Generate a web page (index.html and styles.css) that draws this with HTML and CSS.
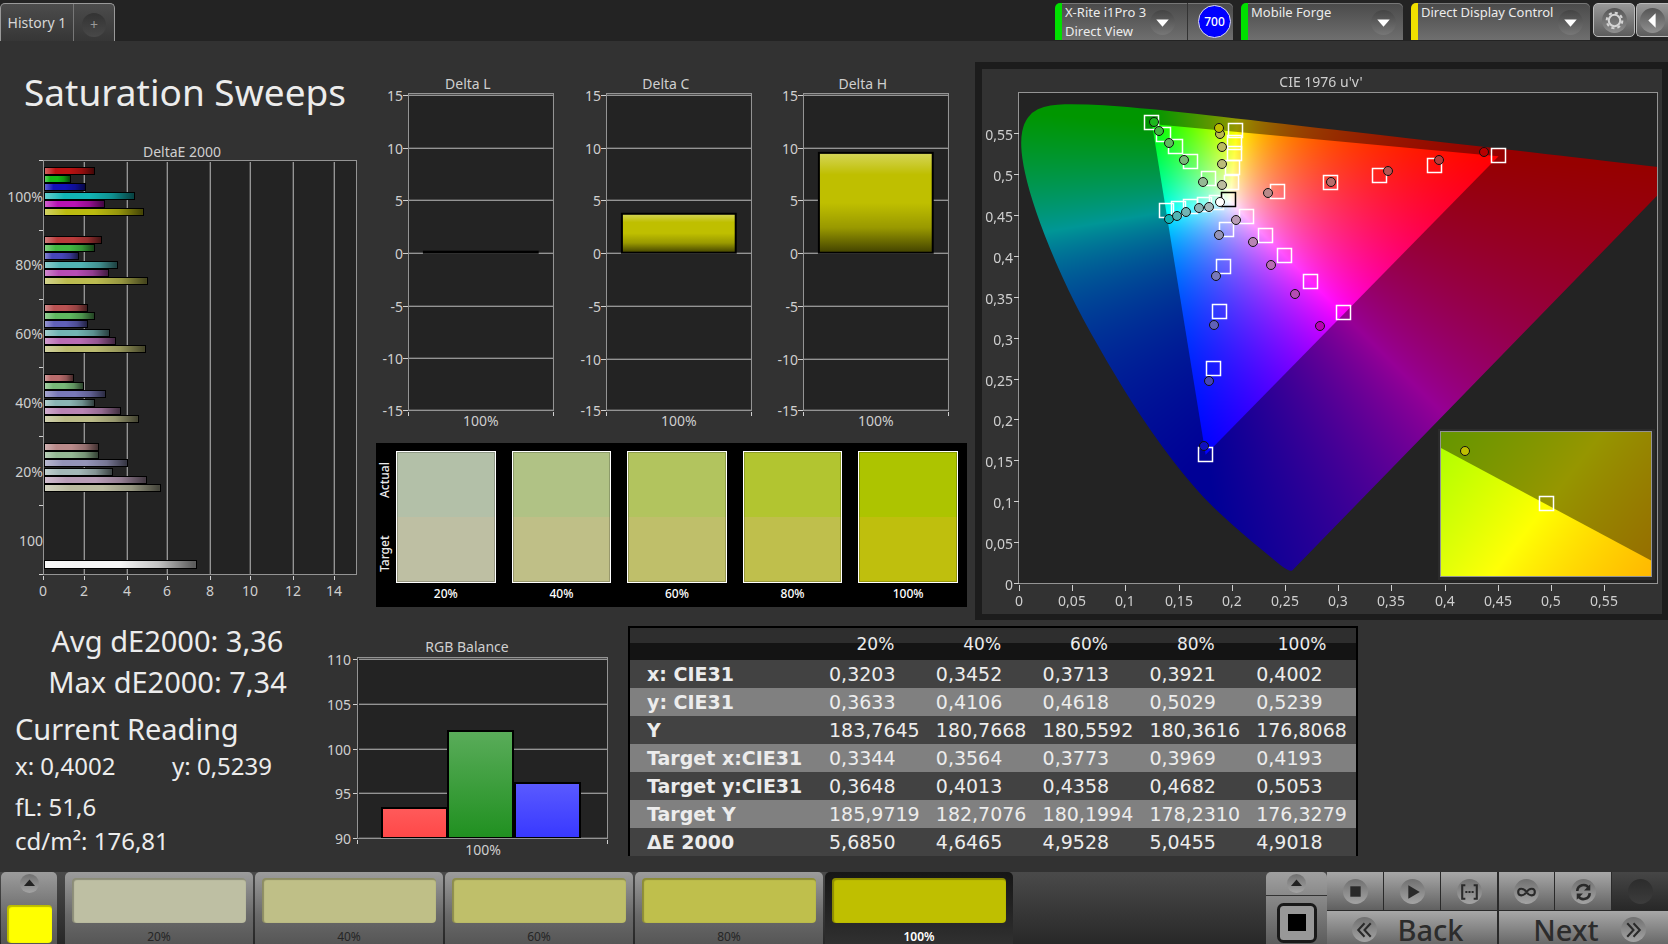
FILE: index.html
```html
<!DOCTYPE html>
<html lang="en">
<head>
<meta charset="utf-8">
<title>Saturation Sweeps</title>
<link rel="stylesheet" href="styles.css">
</head>
<body>
<div class="app">
  <header class="topbar">
    <nav class="tabs">
      <button class="tab" type="button">History 1</button>
      <button class="tab tab-add" type="button" aria-label="Add history"><span class="add-disc">+</span></button>
    </nav>
    <div class="devices">
      <div class="device device-meter">
        <button class="device-menu" type="button" aria-haspopup="menu"><span class="device-text">X-Rite i1Pro 3<br>Direct View</span><span class="disc"><svg viewBox="0 0 24 24"><path d="M6 9h12l-6 7z" fill="#fff"/></svg></span></button>
        <span class="badge-cell"><span class="badge">700</span></span>
      </div>
      <div class="device device-source">
        <button class="device-menu" type="button" aria-haspopup="menu"><span class="device-text">Mobile Forge</span><span class="disc"><svg viewBox="0 0 24 24"><path d="M6 9h12l-6 7z" fill="#fff"/></svg></span></button>
      </div>
      <div class="device device-display">
        <button class="device-menu" type="button" aria-haspopup="menu"><span class="device-text">Direct Display Control</span><span class="disc"><svg viewBox="0 0 24 24"><path d="M6 9h12l-6 7z" fill="#fff"/></svg></span></button>
      </div>
      <button class="square-btn" type="button" aria-label="Settings"><span class="disc"><svg viewBox="0 0 24 24" fill="none" stroke="#d4d4d4"><circle cx="12" cy="12" r="5.500" stroke-width="2"/><circle cx="12" cy="12" r="7.500" stroke-width="2" stroke-dasharray="3 2.890"/></svg></span></button>
      <button class="square-btn square-last" type="button" aria-label="Collapse"><span class="disc"><svg viewBox="0 0 24 24"><path d="M15 5v14l-7-7z" fill="#fff"/></svg></span></button>
    </div>
  </header>

  <main class="content">
    <section class="upper">
      <div class="col-left">
        <h1 class="title">Saturation Sweeps</h1>
        <svg class="chart" id="deltaE" viewBox="0 0 370 465"></svg>
      </div>
      <div class="col-mid">
        <div class="delta-row">
          <svg class="chart" id="deltaL" viewBox="0 0 198 362"></svg>
          <svg class="chart" id="deltaC" viewBox="0 0 198 362"></svg>
          <svg class="chart" id="deltaH" viewBox="0 0 198 362"></svg>
        </div>
        <div class="compare">
          <div class="compare-axis"><span>Actual</span><span>Target</span></div>
          <figure class="pair"><div class="pair-box p20"></div><figcaption>20%</figcaption></figure>
          <figure class="pair"><div class="pair-box p40"></div><figcaption>40%</figcaption></figure>
          <figure class="pair"><div class="pair-box p60"></div><figcaption>60%</figcaption></figure>
          <figure class="pair"><div class="pair-box p80"></div><figcaption>80%</figcaption></figure>
          <figure class="pair"><div class="pair-box p100"></div><figcaption>100%</figcaption></figure>
        </div>
      </div>
      <div class="cie">
        <canvas id="cieField" width="680" height="545"></canvas>
        <svg class="chart" id="cieMarks" viewBox="0 0 680 545"></svg>
      </div>
    </section>

    <section class="lower">
      <div class="stats">
        <p class="stat-big">Avg dE2000: 3,36</p>
        <p class="stat-big">Max dE2000: 7,34</p>
        <h2 class="reading-title">Current Reading</h2>
        <p class="reading reading-xy"><span>x: 0,4002</span><span>y: 0,5239</span></p>
        <p class="reading">fL: 51,6</p>
        <p class="reading">cd/m²: 176,81</p>
      </div>
      <div class="rgb"><svg class="chart" id="rgb" viewBox="0 0 300 230"></svg></div>
      <table class="data">
        <thead><tr><th class="data-label"></th><th>20%</th><th>40%</th><th>60%</th><th>80%</th><th>100%</th></tr></thead>
        <tbody>
          <tr><th>x: CIE31</th><td>0,3203</td><td>0,3452</td><td>0,3713</td><td>0,3921</td><td>0,4002</td></tr>
          <tr><th>y: CIE31</th><td>0,3633</td><td>0,4106</td><td>0,4618</td><td>0,5029</td><td>0,5239</td></tr>
          <tr><th>Y</th><td>183,7645</td><td>180,7668</td><td>180,5592</td><td>180,3616</td><td>176,8068</td></tr>
          <tr><th>Target x:CIE31</th><td>0,3344</td><td>0,3564</td><td>0,3773</td><td>0,3969</td><td>0,4193</td></tr>
          <tr><th>Target y:CIE31</th><td>0,3648</td><td>0,4013</td><td>0,4358</td><td>0,4682</td><td>0,5053</td></tr>
          <tr><th>Target Y</th><td>185,9719</td><td>182,7076</td><td>180,1994</td><td>178,2310</td><td>176,3279</td></tr>
          <tr><th>ΔE 2000</th><td>5,6850</td><td>4,6465</td><td>4,9528</td><td>5,0455</td><td>4,9018</td></tr>
        </tbody>
      </table>
    </section>
  </main>

  <footer class="bottombar">
    <button class="current" type="button" aria-label="Current colour"><span class="disc disc-small"><svg viewBox="0 0 24 24"><path d="M5 15h14l-7-8z" fill="#222"/></svg></span><span class="chip chip-current"></span></button>
    <div class="steps">
      <button class="step" type="button"><span class="chip s20"></span>20%</button>
      <button class="step" type="button"><span class="chip s40"></span>40%</button>
      <button class="step" type="button"><span class="chip s60"></span>60%</button>
      <button class="step" type="button"><span class="chip s80"></span>80%</button>
      <button class="step step-on" type="button"><span class="chip s100"></span>100%</button>
    </div>
    <div class="window-col">
      <button class="window-up" type="button" aria-label="Expand"><span class="disc disc-small"><svg viewBox="0 0 24 24"><path d="M5 15h14l-7-8z" fill="#222"/></svg></span></button>
      <button class="window-size" type="button" aria-label="Window size"><svg width="40" height="40" viewBox="0 0 40 40"><rect x="1.500" y="1.500" width="37" height="37" rx="5" fill="#989898" stroke="#191919" stroke-width="3"/><rect x="11" y="11" width="18" height="17" fill="#000"/></svg></button>
    </div>
    <div class="controls">
      <div class="transport">
        <button class="ctl" type="button" aria-label="Stop"><span class="disc"><svg viewBox="0 0 24 24"><path d="M7 7h10v10H7z" fill="#2a2a2a"/></svg></span></button>
        <button class="ctl" type="button" aria-label="Play"><span class="disc"><svg viewBox="0 0 24 24"><path d="M8 6l11 6.500L8 19z" fill="#2a2a2a"/></svg></span></button>
        <button class="ctl" type="button" aria-label="Range"><span class="disc"><svg viewBox="0 0 24 24" fill="none" stroke="#2a2a2a" stroke-width="2"><path d="M8 6H5v13h3M16 6h3v13h-3M8 12.500h2m1 0h2m1 0h2"/></svg></span></button>
        <button class="ctl ctl-split" type="button" aria-label="Continuous"><span class="disc"><svg viewBox="0 0 24 24" fill="none" stroke="#2a2a2a" stroke-width="2"><path d="M12 12.500C9 8 4 8.500 4 12.500S9 17 12 12.500S20 8.500 20 12.500S15 17 12 12.500z"/></svg></span></button>
        <button class="ctl" type="button" aria-label="Repeat"><span class="disc"><svg viewBox="0 0 24 24" fill="none" stroke="#2a2a2a" stroke-width="2.500"><path d="M6 11.500a6 6 0 0 1 11-3M18 13.500a6 6 0 0 1-11 3"/><path d="M18.500 5v6h-6zM5.500 20v-6h6z" fill="#2a2a2a" stroke="none"/></svg></span></button>
        <button class="ctl ctl-off" type="button" aria-label="Record" disabled><span class="disc"></span></button>
      </div>
      <div class="pager">
        <button class="page-btn" type="button"><span class="disc"><svg viewBox="0 0 24 24" fill="none" stroke="#2a2a2a" stroke-width="2"><path d="M12 6l-6 6.500 6 6.500M18 6l-6 6.500 6 6.500"/></svg></span>Back</button>
        <button class="page-btn page-next ctl-split" type="button">Next<span class="disc"><svg viewBox="0 0 24 24" fill="none" stroke="#2a2a2a" stroke-width="2"><path d="M6 6l6 6.500-6 6.500M12 6l6 6.500-6 6.500"/></svg></span></button>
      </div>
    </div>
  </footer>
</div>
<script src="charts.js"></script>
</body>
</html>
```
FILE: styles.css
```css
* { box-sizing: border-box; }
body {
  margin: 0;
  background: #323232;
  color: #ececec;
  font-family: "Noto Sans", "Open Sans", sans-serif;
  font-size: 14px;
}
button { font: inherit; color: inherit; border: 0; padding: 0; margin: 0; background: none; cursor: pointer; }
h1, h2, p, figure { margin: 0; font-weight: 400; }
svg { display: block; }

.app { height: 100vh; display: flex; flex-direction: column; overflow: hidden; }

/* top bar */
.topbar { display: flex; justify-content: space-between; align-items: flex-end; height: 41px; background: #232323; flex: none; }
.tabs { display: flex; height: 38px; border: 1px solid #999; border-bottom: 0; border-radius: 5px 5px 0 0; background: linear-gradient(#4c4c4c, #363636); }
.tab { width: 72px; color: #d6d6d6; }
.tab-add { width: 41px; border-left: 1px solid #777; color: #999; display: flex; align-items: center; justify-content: center; padding-top: 4px; }
.add-disc { width: 24px; height: 24px; line-height: 24px; border-radius: 50%; background: linear-gradient(#333, #484848); }
.devices { display: flex; height: 38px; }
.device { display: flex; border-left: 7px solid #00e000; border-radius: 5px 5px 0 0; background: linear-gradient(#4a4a4a, #6f6f6f); box-shadow: inset 0 1px #777; margin-right: 8px; height: 37px; }
.device-meter { width: 178px; }
.device-source { width: 162px; }
.device-display { width: 179px; border-left-color: #f0e000; margin-right: 3px; }
.device-menu { flex: 1; display: flex; justify-content: space-between; text-align: left; line-height: 19px; font-size: 13px; padding: 0 7px 0 3px; white-space: nowrap; }
.device-menu .disc { margin-top: 7px; }
.device-meter .device-menu { padding-right: 12px; }
.device-display .device-text { margin-right: -8px; }
.badge-cell { width: 46px; border-left: 1px solid #333; display: flex; align-items: center; justify-content: flex-end; padding-right: 2px; }
.badge { width: 33px; height: 33px; border-radius: 50%; border: 1px solid #dde; background: #00f; color: #fff; font-size: 12px; line-height: 31px; text-align: center; font-weight: 500; }
.disc { flex: none; display: block; width: 25px; height: 25px; border-radius: 50%; background: linear-gradient(#444, #777); }
.square-btn { width: 42px; height: 34px; border: 1px solid #bbb; border-radius: 5px; background: linear-gradient(#999, #5c5c5c); display: flex; align-items: center; justify-content: center; }
.square-btn .disc { background: linear-gradient(#555, #909090); }
.square-last { width: 32px; border-right: 0; border-radius: 5px 0 0 5px; margin-left: 1px; }

/* content */
.content { flex: 1; min-height: 0; }
.upper { display: grid; grid-template-columns: 370fr 605fr 693fr; }
.chart { width: 100%; height: auto; }
.title { font-size: 37px; line-height: 50px; padding: 26px 0 22px 24px; white-space: nowrap; }
.delta-row { display: grid; grid-template-columns: repeat(3, 1fr); padding: 34px 12px 7px 0; }
.compare { margin: 0 8px 0 6px; background: #000; padding: 8px 9px 0 0; height: 164px; display: flex; gap: 16px; }
.compare-axis { width: 18px; margin: -8px -14px 0 0; height: 148px; display: flex; flex-direction: column; }
.compare-axis span { flex: 1; writing-mode: vertical-rl; transform: rotate(180deg); text-align: center; line-height: 18px; font-size: 12px; font-weight: 500; }
.pair { flex: 1; text-align: center; font-size: 12px; line-height: 22px; font-weight: 500; color: #fff; }
.pair-box { height: 132px; border: 1px solid #fff; box-shadow: inset 0 0 0 1px #0003; }
.p20 { background: linear-gradient(#b3c0a8 50%, #bebfa3 50%); }
.p40 { background: linear-gradient(#b0c285 50%, #bfbf87 50%); }
.p60 { background: linear-gradient(#b2c45e 50%, #bfbf6a 50%); }
.p80 { background: linear-gradient(#b2c530 50%, #bfbf4c 50%); }
.p100 { background: linear-gradient(#adc400 50%, #bfbf0d 50%); }
.cie { margin-top: 21px; border: 7px solid #1c1c1c; border-right-width: 6px; border-bottom-width: 6px; display: grid; align-self: start; }
.cie > * { grid-area: 1 / 1; width: 100%; height: auto; }

.lower { display: flex; }
.stats { flex: 0 0 320px; padding-left: 15px; }
.stat-big { font-size: 29px; line-height: 41px; text-align: center; margin-left: -14px; padding-left: 14px; white-space: nowrap; }
.reading-title { font-size: 29px; line-height: 40px; padding-top: 7px; }
.reading { font-size: 24px; line-height: 34px; }
.reading-xy { display: grid; grid-template-columns: 157px 1fr; margin-bottom: 7px; }
.rgb { flex: 0 0 300px; padding-top: 17px; }

.data { flex: none; width: 730px; margin: 6px 0 0 8px; border-collapse: collapse; table-layout: fixed; border: 2px solid #000; border-bottom: 0; font-family: "DejaVu Sans", "Noto Sans", sans-serif; font-size: 19px; align-self: flex-start; }
.data th, .data td { padding: 0; text-align: left; white-space: nowrap; height: 28px; line-height: 28px; }
.data thead tr { background: linear-gradient(#2e2e2e 50%, #141414 50%); }
.data thead th { font-size: 17px; font-weight: 400; text-align: center; height: 33px; padding-right: 2px; }
.data .data-label { width: 194px; }
.data tbody tr { background: #424242; }
.data tbody tr:nth-child(even) { background: #808080; }
.data tbody th { padding-left: 17px; }
.data td { padding-left: 6px; }

/* bottom bar */
.bottombar { flex: none; height: 72px; display: flex; overflow: hidden; background: linear-gradient(#4a4a4a, #282828); }
.current, .step { background: linear-gradient(#9c9c9c, #6a6a6a 60%, #565656); border-radius: 5px 5px 0 0; display: flex; flex-direction: column; align-items: center; justify-content: flex-start; }
.current { width: 56px; margin: 0 8px 0 1px; padding-top: 2px; gap: 12px; }
.chip { flex: none; display: block; border-radius: 4px; box-shadow: inset 1px 1px 1px 1px #0004; }
.chip-current { width: 45px; height: 38px; background: #ff0; }
.steps { display: flex; gap: 2px; flex: 1; }
.step { width: 188px; padding: 6px 7px 0; font-size: 12px; line-height: 28px; color: #262626; }
.step .chip { width: 100%; height: 45px; }
.step-on { background: linear-gradient(#161616, #303030); color: #fff; font-weight: 600; }
.s20 { background: #bebfa3; }
.s40 { background: #bfbf87; }
.s60 { background: #bfbf6a; }
.s80 { background: #bfbf4c; }
.s100 { background: #bfbf00; }
.window-col { width: 61px; display: flex; flex-direction: column; border-radius: 5px 5px 0 0; overflow: hidden; }
.window-up { height: 23px; background: linear-gradient(#a0a0a0, #8a8a8a); display: flex; justify-content: center; padding-top: 2px; }
.window-size { flex: 1; border-top: 1px solid #333; background: linear-gradient(#8a8a8a, #5c5c5c); display: flex; justify-content: center; padding-top: 7px; }
.controls { width: 341px; display: flex; flex-direction: column; gap: 1px; background: #2a2a2a; }
.transport { flex: none; display: grid; grid-template-columns: repeat(6, 1fr); gap: 1px; height: 38px; }
.ctl, .page-btn { background: linear-gradient(#a8a8a8, #606060); display: flex; align-items: center; justify-content: center; }
.ctl .disc, .page-btn .disc, .disc-small { background: linear-gradient(#707070, #a4a4a4); }
.disc-small { width: 19px; height: 19px; }
.ctl-split { border-left: 1px solid #2a2a2a; }
.ctl-off { background: linear-gradient(#464646, #282828); }
.ctl-off .disc { background: linear-gradient(#2c2c2c, #3c3c3c); }
.pager { flex: none; display: grid; grid-template-columns: 1fr 1fr; gap: 1px; }
.page-btn { height: 37px; font-size: 29px; line-height: 36px; font-weight: 500; color: #2c2c2c; gap: 20px; padding-right: 8px; }
.page-next { gap: 22px; padding: 0 0 0 12px; }

/* chart parts */
.chart text { font-size: 14px; fill: #cfcfcf; }
.end { text-anchor: end; }
.mid { text-anchor: middle; }
.plot { fill: #232323; }
.line { stroke: #949494; shape-rendering: crispEdges; }
.shade { stroke: #4c4c4c; shape-rendering: crispEdges; }
.frame { fill: none; stroke: #949494; shape-rendering: crispEdges; }
.tick { stroke: #d0d0d0; shape-rendering: crispEdges; }
.bar { stroke: #000; stroke-width: 2; }
.bar-thin { stroke: #000; stroke-width: 1; }
.square { fill: none; stroke: #fff; stroke-width: 1.5; }
.square-ref { stroke: #000; }
.dot { stroke: #111; stroke-width: 1; }
```
FILE: charts.js
```js
const NS = 'http://www.w3.org/2000/svg';

function add(parent, name, attrs, text) {
  const el = document.createElementNS(NS, name);
  for (const k in attrs) el.setAttribute(k, attrs[k]);
  if (text !== undefined) el.textContent = text;
  parent.appendChild(el);
  return el;
}
function line(svg, cls, x1, y1, x2, y2) {
  add(svg, 'line', { class: cls, x1: x1 + 0.5, y1: y1 + 0.5, x2: x2 + 0.5, y2: y2 + 0.5 });
}
function gloss(svg, id, horizontal) {
  const g = add(svg, 'linearGradient', { id, x1: 0, y1: 0, x2: horizontal ? 1 : 0, y2: horizontal ? 0 : 1 });
  [[0, '#fff', 0.35], [0.22, '#fff', 0], [0.5, '#000', 0], [0.75, '#000', 0.2], [0.98, '#000', 0.62]].forEach(s =>
    add(g, 'stop', { offset: s[0], 'stop-color': s[1], 'stop-opacity': s[2] }));
}
function bar(svg, x, y, w, h, fill, glossId, thin) {
  add(svg, 'rect', { x, y, width: w, height: h, fill });
  if (glossId) add(svg, 'rect', { x, y, width: w, height: h, fill: `url(#${glossId})` });
  add(svg, 'rect', { class: thin ? 'bar-thin' : 'bar', x, y, width: w, height: h, fill: 'none' });
}

// DeltaE 2000 bars, grouped by saturation
(function () {
  const svg = document.getElementById('deltaE');
  gloss(svg, 'glossE', true);
  add(svg, 'text', { class: 'mid', x: 182, y: 18 }, 'DeltaE 2000');
  add(svg, 'rect', { class: 'plot', x: 44, y: 21, width: 312, height: 414 });
  [84, 127, 167, 210, 250, 293, 334].forEach((x, i) => {
    line(svg, 'shade', x - 1, 22, x - 1, 435);
    line(svg, 'line', x, 22, x, 435);
    line(svg, 'tick', x, 436, x, 440);
    add(svg, 'text', { class: 'mid', x, y: 457 }, (i + 1) * 2);
  });
  line(svg, 'tick', 43, 436, 43, 440);
  add(svg, 'text', { class: 'mid', x: 43, y: 457 }, '0');
  [21, 91, 160, 228, 297, 366, 435].forEach(y => line(svg, 'tick', 38, y, 43, y));
  add(svg, 'rect', { class: 'frame', x: 43.5, y: 21.5, width: 313, height: 414 });
  const groups = [
    [28, ['#bb1212', '#14b814', '#1212b8', '#12b4b4', '#b812b4', '#bbbb10'], [95, 71, 86, 135, 105, 144]],
    [97, ['#b93b3b', '#42b842', '#4646b8', '#52b4b4', '#b64cb4', '#bbbb50'], [102, 95, 79, 118, 109, 148]],
    [165, ['#b95252', '#60b860', '#6060b8', '#72b4b4', '#b86cb4', '#bbbb70'], [88, 95, 88, 110, 116, 146]],
    [235, ['#b96c6c', '#78b878', '#7878b8', '#8ab4b4', '#b884b4', '#bbbb88'], [74, 84, 106, 95, 121, 139]],
    [304, ['#b98a8a', '#94b894', '#9494b8', '#a4b8b8', '#b89cb6', '#bbbba0'], [99, 99, 128, 113, 147, 161]]
  ];
  groups.forEach(([y, colors, ends]) => ends.forEach((e, i) =>
    bar(svg, 44.5, y + 0.5 + Math.round(i * 8.2), e - 45, 7, colors[i], 'glossE', true)));
  bar(svg, 44.5, 421.5, 152, 8, '#f4f4f4', 'glossE', true);
  [['100%', 63], ['80%', 131], ['60%', 200], ['40%', 269], ['20%', 338], ['100', 407]].forEach(l =>
    add(svg, 'text', { class: 'end', x: 43, y: l[1] }, l[0]));
})();

// Delta L / C / H columns
function deltaChart(id, title, top, thickness) {
  const svg = document.getElementById(id);
  gloss(svg, 'gloss' + id, false);
  add(svg, 'text', { class: 'mid', x: 98, y: 14 }, title);
  add(svg, 'rect', { class: 'plot', x: 39, y: 18, width: 144, height: 318 });
  [20, 73, 125, 178, 231, 284, 336].forEach((y, i) => {
    line(svg, 'shade', 39, y - 1, 183, y - 1);
    line(svg, 'line', 39, y, 183, y);
    line(svg, 'tick', 33, y, 38, y);
    add(svg, 'text', { class: 'end', x: 33, y: y + 6 }, 15 - i * 5);
  });
  add(svg, 'rect', { class: 'frame', x: 38.5, y: 18.5, width: 145, height: 318 });
  line(svg, 'tick', 38, 337, 38, 341);
  line(svg, 'tick', 183, 337, 183, 341);
  bar(svg, 54, top, 114, thickness, '#bfbf00', thickness > 2 ? 'gloss' + id : null);
  add(svg, 'text', { class: 'mid', x: 111, y: 352 }, '100%');
}
deltaChart('deltaL', 'Delta L', 177, 1);
deltaChart('deltaC', 'Delta C', 139, 39);
deltaChart('deltaH', 'Delta H', 78, 100);

// RGB balance
(function () {
  const svg = document.getElementById('rgb');
  add(svg, 'text', { class: 'mid', x: 147, y: 15 }, 'RGB Balance');
  add(svg, 'rect', { class: 'plot', x: 38, y: 20, width: 249, height: 181 });
  [22, 67, 112, 156, 201].forEach((y, i) => {
    line(svg, 'shade', 38, y - 1, 287, y - 1);
    line(svg, 'line', 38, y, 287, y);
    line(svg, 'tick', 32, y, 37, y);
    add(svg, 'text', { class: 'end', x: 31, y: y + 6 }, 110 - i * 5);
  });
  [['r', '#ff5a5a', '#ff4848', 62, 171], ['g', '#5aac5a', '#209020', 128, 94], ['b', '#5a5aff', '#3838ff', 195, 146]].forEach(b => {
    const g = add(svg, 'linearGradient', { id: 'bal' + b[0], x1: 0, y1: 0, x2: 0, y2: 1 });
    add(g, 'stop', { offset: 0, 'stop-color': b[1] });
    add(g, 'stop', { offset: 1, 'stop-color': b[2] });
    bar(svg, b[3], b[4], 65, 201 - b[4], `url(#bal${b[0]})`);
  });
  line(svg, 'line', 38, 201, 287, 201);
  add(svg, 'rect', { class: 'frame', x: 37.5, y: 20.5, width: 250, height: 181 });
  line(svg, 'tick', 37, 202, 37, 206);
  line(svg, 'tick', 287, 202, 287, 206);
  add(svg, 'text', { class: 'mid', x: 163, y: 218 }, '100%');
})();

// CIE 1976 u'v' diagram
(function () {
  const OX = 37, OY = 515, SX = 1064, SY = 818;
  const locus = [[.1741,.005],[.1733,.0048],[.1714,.0051],[.1689,.0069],[.1644,.0109],[.1566,.0177],[.144,.0297],[.1355,.0399],[.1241,.0578],[.1096,.0868],[.0913,.1327],[.0687,.2007],[.0454,.295],[.0235,.4127],[.0082,.5384],[.0039,.6548],[.0139,.7502],[.0389,.812],[.0743,.8338],[.1142,.8262],[.1547,.8059],[.2296,.7543],[.3016,.6923],[.3731,.6245],[.4441,.5547],[.5125,.4866],[.5752,.4242],[.627,.3725],[.6658,.334],[.6915,.3083],[.719,.2809],[.7347,.2653]]
    .map(([x, y]) => { const d = -2 * x + 12 * y + 3; return [4 * x / d, 9 * y / d]; });
  const triangle = [[.4507, .5229], [.125, .5625], [.1754, .1579]];

  // linear sRGB, scaled so that the strongest channel reaches the level
  function colour(u, v, level) {
    const d = 6 * u - 16 * v + 12, x = 9 * u / d, y = 4 * v / d;
    const X = x / y, Z = (1 - x - y) / y;
    const c = [3.2406 * X - 1.5372 - 0.4986 * Z, -0.9689 * X + 1.8758 + 0.0415 * Z, 0.0557 * X - 0.204 + 1.057 * Z].map(n => Math.max(0, n));
    const m = Math.max(...c) || 1;
    return c.map(n => level * n / m);
  }
  function field(w, h, toU, toV, level) {
    const cv = document.createElement('canvas');
    cv.width = w; cv.height = h;
    const cx = cv.getContext('2d'), img = cx.createImageData(w, h);
    for (let y = 0; y < h; y++) for (let x = 0; x < w; x++) {
      const c = colour(toU(x, y), Math.max(0.001, toV(y)), level), i = (y * w + x) * 4;
      img.data[i] = c[0]; img.data[i + 1] = c[1]; img.data[i + 2] = c[2]; img.data[i + 3] = 255;
    }
    cx.putImageData(img, 0, 0);
    return cv;
  }
  const ctx = document.getElementById('cieField').getContext('2d');
  ctx.fillStyle = '#323232'; ctx.fillRect(0, 0, 680, 545);
  ctx.fillStyle = '#232323'; ctx.fillRect(OX, 24, 639, 491);
  const P = ([u, v]) => [OX + u * SX, OY - v * SY];
  const toU = x => (x - OX) / SX, toV = y => (OY - y) / SY;

  ctx.save();
  ctx.beginPath(); ctx.rect(OX, 24, 639, 491); ctx.clip();
  ctx.beginPath();
  const pts = locus.map(P);
  ctx.moveTo(...pts[0]);
  for (let i = 1; i < pts.length - 1; i++) {
    const a = pts[i], b = pts[i + 1];
    ctx.quadraticCurveTo(a[0], a[1], (a[0] + b[0]) / 2, (a[1] + b[1]) / 2);
  }
  ctx.lineTo(...pts[pts.length - 1]);
  ctx.closePath(); ctx.clip();
  ctx.drawImage(field(680, 545, toU, toV, 150), 0, 0);
  ctx.beginPath();
  triangle.map(P).forEach((p, i) => i ? ctx.lineTo(...p) : ctx.moveTo(...p));
  ctx.closePath(); ctx.clip();
  ctx.drawImage(field(680, 545, toU, toV, 255), 0, 0);
  ctx.restore();

  // magnified view around the selected target
  const IX = 459, IY = 363, IW = 211, IH = 145, ZX = 7500, ZY = 23100, SLANT = 0.75, cu = .2039, cv = .5529;
  const iu = (x, y) => cu + (x - 105 + (y - 72) * SLANT) / ZX;
  const iv = y => cv - (y - 72) / ZY;
  ctx.fillStyle = '#2b2b2b'; ctx.fillRect(IX - 3, IY - 3, IW + 6, IH + 6);
  ctx.drawImage(field(IW, IH, iu, iv, 150), IX, IY);
  ctx.save();
  ctx.beginPath();
  ctx.moveTo(IX, IY + 16); ctx.lineTo(IX + IW, IY + 129); ctx.lineTo(IX + IW, IY + IH); ctx.lineTo(IX, IY + IH);
  ctx.closePath(); ctx.clip();
  ctx.drawImage(field(IW, IH, iu, iv, 255), IX, IY);
  ctx.restore();

  const svg = document.getElementById('cieMarks');
  add(svg, 'text', { class: 'mid', x: 339, y: 18 }, "CIE 1976 u'v'");
  add(svg, 'rect', { class: 'frame', x: 36.5, y: 23.5, width: 639, height: 491 });
  add(svg, 'rect', { class: 'frame', x: IX - 0.5, y: IY - 0.5, width: IW, height: IH });
  for (let i = 0; i < 12; i++) {
    const label = String(+(i * 0.05).toFixed(2)).replace('.', ',');
    const x = Math.round(OX + i * 53.2), y = Math.round(OY - i * 40.9) - 1;
    line(svg, 'tick', x, 515, x, 521);
    line(svg, 'tick', 31, y, 36, y);
    add(svg, 'text', { class: 'mid', x, y: 537 }, label);
    add(svg, 'text', { class: 'end', x: 31, y: y + 7 }, label);
  }
  const squares = [[169,53],[181,65],[193,77],[208,92],[226,109],[253,61],[252,73],[252,84],[250,98],[249,113],[184,141],[196,139],[208,137],[222,135],[234,133],[295,122],[348,113],[397,106],[452,96],[516,86],[264,147],[283,166],[302,186],[328,212],[361,243],[244,160],[241,197],[237,242],[231,299],[223,385],[564,434]];
  squares.forEach(([x, y]) => add(svg, 'rect', { class: 'square', x: x - 6.5, y: y - 6.5, width: 14, height: 14 }));
  add(svg, 'rect', { class: 'square square-ref', x: 239.5, y: 123.5, width: 14, height: 14 });
  const dots = [
    [172,53,'#1cb81c'],[177,62,'#42b842'],[187,74,'#60b860'],[202,91,'#78b878'],[221,113,'#94b894'],
    [238,65,'#bbbb50'],[237,59,'#bfbf00'],[240,78,'#bbbb60'],[240,95,'#bbbb78'],[240,116,'#bbbba0'],
    [187,150,'#12b4b4'],[195,147,'#52b4b4'],[204,143,'#72b4b4'],[217,139,'#8ab4b4'],[227,138,'#a4b8b8'],
    [238,133,'#fff'],[286,124,'#b98a8a'],[349,113,'#b96c6c'],[406,102,'#b95252'],[457,91,'#b93b3b'],[502,83,'#b80000'],
    [254,151,'#b89cb6'],[271,173,'#b884b4'],[289,196,'#b86cb4'],[313,225,'#b64cb4'],[338,257,'#b800b4'],
    [237,166,'#9494b8'],[234,207,'#7878b8'],[232,256,'#6060b8'],[227,312,'#4646b8'],[222,377,'#1010c0'],[483,382,'#bfbf00']
  ];
  dots.forEach(([x, y, fill]) => add(svg, 'circle', { class: 'dot', cx: x, cy: y, r: 4.5, fill }));
})();
```
